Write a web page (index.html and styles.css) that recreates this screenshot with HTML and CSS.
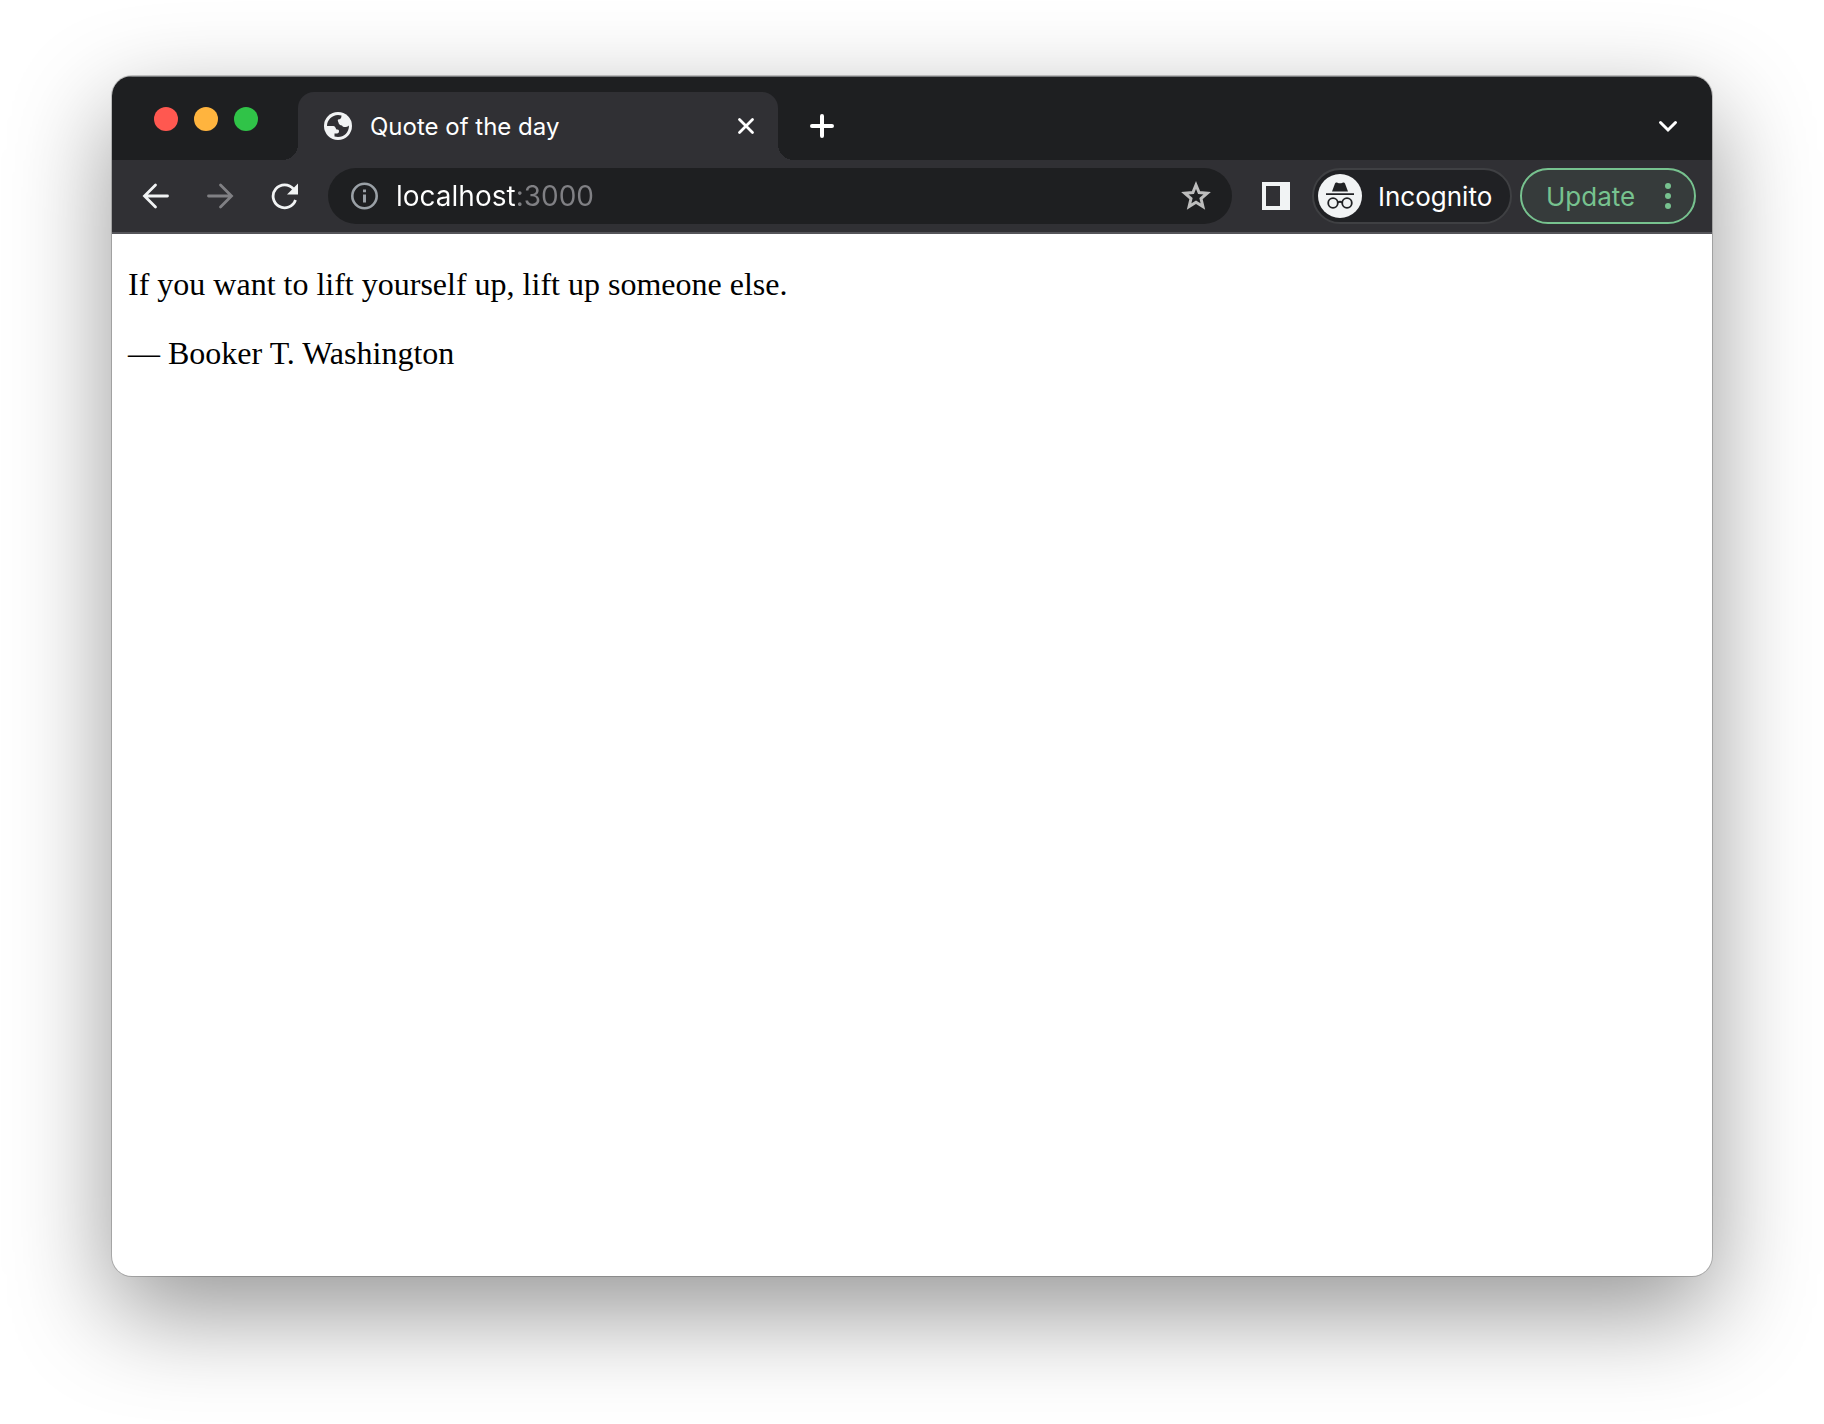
FILE: index.html
```html
<!DOCTYPE html>
<html lang="en">
<head>
    <meta charset="UTF-8">
    <meta name="viewport" content="width=device-width, initial-scale=1.0">
    <title>Quote of the day</title>
    <link rel="stylesheet" href="styles.css">
</head>
<body>
    <div class="window">
        <header class="tab-strip">
            <div class="window-buttons">
                <button class="dot red" aria-label="Close window"></button>
                <button class="dot yellow" aria-label="Minimize window"></button>
                <button class="dot green" aria-label="Zoom window"></button>
            </div>
            <div class="tab">
                <svg class="icon-28" viewBox="0 0 28 28">
                    <circle cx="14" cy="14" r="14" fill="#f1f3f4"/>
                    <path d="M3 14C3 8 8 3 14 3L17.500 3.500C17.500 6 16.500 7.500 14 7.500C13.500 8.500 14 9.500 14.500 10.500C14.500 12 16 13.500 18 13.500C19 15.500 22.500 15.500 25 13.500C25 20.500 20 25 14 25L10.500 24.500V21.500H13C14.500 21.500 15 20.500 15 19C15 17.500 14 17.500 12.500 17.500C11.500 16.500 11.500 14.500 9.500 14Z" fill="#303034"/>
                </svg>
                <span class="tab-title">Quote of the day</span>
                <button class="tab-close" aria-label="Close tab">
                    <svg class="icon-28" viewBox="0 0 28 28"><path d="M7.500 7.500l13 13M20.500 7.500l-13 13" stroke="#fff" stroke-width="2.800" stroke-linecap="round"/></svg>
                </button>
            </div>
            <button class="new-tab" aria-label="New tab">
                <svg class="icon-28" viewBox="0 0 28 28"><path d="M14 4v20M4 14h20" stroke="#fff" stroke-width="4" stroke-linecap="round"/></svg>
            </button>
            <button class="tab-search" aria-label="Search tabs">
                <svg class="icon-28" viewBox="0 0 28 28"><path d="M6.500 10.500l7.500 7.500 7.500-7.500" fill="none" stroke="#fff" stroke-width="3" stroke-linecap="round"/></svg>
            </button>
        </header>
        <nav class="toolbar">
            <button class="nav-button" aria-label="Back">
                <svg class="icon-28" viewBox="0 0 28 28"><path d="M25.500 14H3M13.500 3L2.500 14l11 11" fill="none" stroke="#f1f3f4" stroke-width="2.800" stroke-linecap="round"/></svg>
            </button>
            <button class="nav-button" aria-label="Forward" disabled>
                <svg class="icon-28" viewBox="0 0 28 28"><path d="M2.500 14H25M14.500 3l11 11-11 11" fill="none" stroke="#808084" stroke-width="2.800" stroke-linecap="round"/></svg>
            </button>
            <button class="nav-button" aria-label="Reload">
                <svg class="icon-28" viewBox="0 0 28 28">
                    <path d="M25.500 18A11.500 11.500 0 1 1 23.500 7" fill="none" stroke="#f1f3f4" stroke-width="2.800"/>
                    <path d="M28 1.500V12.500H17Z" fill="#f1f3f4"/>
                </svg>
            </button>
            <div class="address-bar">
                <svg class="icon-28" viewBox="0 0 28 28">
                    <circle cx="13.500" cy="14" r="12.200" fill="none" stroke="#9aa0a6" stroke-width="2.600"/>
                    <path d="M12 7.500h3v2.700h-3zM12 12.500h3v8h-3z" fill="#9aa0a6"/>
                </svg>
                <input class="url" type="text" value="localhost:3000" aria-label="Address">
                <button class="bookmark" aria-label="Bookmark this page">
                    <svg class="icon-32" viewBox="0 0 32 32"><path d="M16 5l3.100 7.500 8.100.7-6.200 5.300 1.900 8-6.900-4.200-6.900 4.200 1.900-8-6.200-5.300 8.100-.7z" fill="none" stroke="#bdbdbd" stroke-width="3"/></svg>
                </button>
            </div>
            <button class="side-panel" aria-label="Side panel">
                <svg class="icon-28" viewBox="0 0 28 28"><path d="M0 0h28v28H0zM4 4v20h14V4z" fill="#f1f3f4" fill-rule="evenodd"/></svg>
            </button>
            <button class="chip incognito">
                <svg class="avatar" viewBox="0 0 44 44">
                    <circle cx="22" cy="22" r="22" fill="#f1f3f4"/>
                    <path d="M14 17.500L17 9.500C17.500 8.200 18.500 8.200 19.500 8.700Q22 9.800 24.500 8.700C25.500 8.200 26.500 8.200 27 9.500L30 17.500ZM8 19.300h28v1.800H8z" fill="#202124"/>
                    <g fill="none" stroke="#202124" stroke-width="1.800">
                        <circle cx="15" cy="29" r="4.800"/>
                        <circle cx="29" cy="29" r="4.800"/>
                        <path d="M19.800 28.500Q22 27 24.200 28.500"/>
                    </g>
                </svg>
                Incognito
            </button>
            <button class="chip update">
                Update
                <svg class="menu-dots" viewBox="0 0 8 28" fill="#77c28f">
                    <circle cx="4" cy="4" r="3"/>
                    <circle cx="4" cy="14" r="3"/>
                    <circle cx="4" cy="24" r="3"/>
                </svg>
            </button>
        </nav>
        <main class="page">
            <p>If you want to lift yourself up, lift up someone else.</p>
            <p>— Booker T. Washington</p>
        </main>
    </div>
</body>
</html>
```
FILE: styles.css
```css
* {
    box-sizing: border-box;
}
body {
    margin: 0;
    padding: 76px 112px 148px;
    min-height: 100vh;
    display: flex;
    background-color: #fff;
    font-family: Inter, 'Liberation Sans', sans-serif;
}
button {
    display: flex;
    align-items: center;
    padding: 0;
    border: none;
    background: none;
    color: inherit;
    font-family: inherit;
}
svg {
    display: block;
    flex: none;
}
.icon-28 {
    width: 28px;
    height: 28px;
}
.icon-32 {
    width: 32px;
    height: 32px;
}

.window {
    flex: 1;
    min-width: 0;
    display: flex;
    flex-direction: column;
    overflow: hidden;
    border-radius: 20px;
    background-color: #fff;
    box-shadow: 0 0 0 1px rgba(0, 0, 0, 0.2), 0 36px 100px rgba(0, 0, 0, 0.42);
}

/* Tab strip */
.tab-strip {
    display: flex;
    align-items: flex-end;
    height: 84px;
    padding: 0 30px 0 42px;
    border-top: 1px solid #77797b;
    background-color: #1e1f21;
    color: #fff;
}
.window-buttons {
    display: flex;
    gap: 16px;
    margin-right: 40px;
    padding-bottom: 29px;
}
.dot {
    width: 24px;
    height: 24px;
    border-radius: 50%;
}
.red {
    background-color: #ff5850;
}
.yellow {
    background-color: #ffb43e;
}
.green {
    background-color: #30c348;
}
.tab {
    position: relative;
    display: flex;
    align-items: center;
    width: 480px;
    height: 68px;
    padding: 0 18px 0 26px;
    border-radius: 16px 16px 0 0;
    background-color: #303034;
}
.tab::before, .tab::after {
    content: "";
    position: absolute;
    bottom: 0;
    width: 16px;
    height: 16px;
}
.tab::before {
    right: 100%;
    background: radial-gradient(circle at 0 0, transparent 16px, #303034 16px);
}
.tab::after {
    left: 100%;
    background: radial-gradient(circle at 100% 0, transparent 16px, #303034 16px);
}
.tab-title {
    flex: 1;
    margin-left: 18px;
    font-size: 24px;
}
.new-tab, .tab-search {
    height: 68px;
}
.new-tab {
    margin-left: 30px;
}
.tab-search {
    margin-left: auto;
}

/* Toolbar */
.toolbar {
    display: flex;
    align-items: center;
    height: 74px;
    padding: 0 16px 0 30px;
    border-bottom: 2px solid #55555a;
    background-color: #303034;
    color: #fff;
}
.nav-button {
    margin-right: 36px;
}
.address-bar {
    flex: 1;
    min-width: 0;
    display: flex;
    align-items: center;
    height: 56px;
    margin-right: 30px;
    margin-left: -6px;
    padding: 0 20px 0 23px;
    border-radius: 28px;
    background-color: #1e1f21;
}
.url {
    flex: 1;
    min-width: 0;
    margin-left: 17px;
    padding: 0;
    border: none;
    outline: none;
    /* host in white, port dimmed */
    background: linear-gradient(to right, #fff 121px, #808084 121px);
    background-clip: text;
    -webkit-background-clip: text;
    -webkit-text-fill-color: transparent;
    color: #fff;
    font-family: inherit;
    font-size: 28px;
}
.side-panel {
    margin-right: 22px;
}
.chip {
    height: 56px;
    border-radius: 28px;
    font-size: 26px;
}
.incognito {
    width: 200px;
    margin-right: 8px;
    padding-left: 4px;
    gap: 16px;
    border: 2px solid #3f4043;
    background-color: #202124;
}
.avatar {
    width: 44px;
    height: 44px;
}
.update {
    width: 176px;
    justify-content: space-between;
    padding: 0 22px 0 24px;
    border: 2px solid #77c28f;
    background-color: #363b3b;
    color: #77c28f;
}
.menu-dots {
    width: 8px;
    height: 28px;
}

/* Quote */
.page {
    flex: 1;
    padding: 0 16px;
    color: #000;
    font-family: 'Liberation Serif', 'Times New Roman', serif;
    font-size: 32px;
}
.page p {
    margin: 32px 0;
}
```
